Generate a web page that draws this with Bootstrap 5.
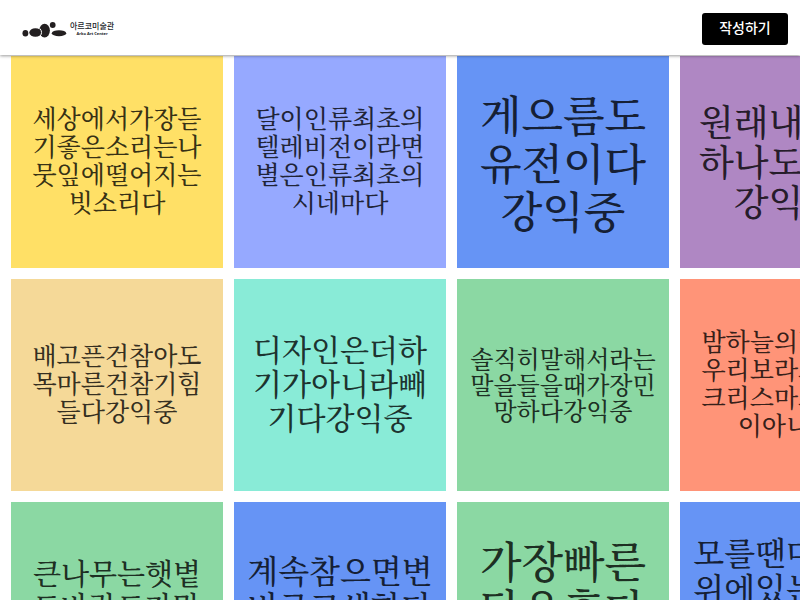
<!DOCTYPE html>
<html lang="ko">
<head>
<meta charset="utf-8">
<meta name="viewport" content="width=device-width, initial-scale=1">
<title>아르코미술관</title>
<link href="https://cdn.jsdelivr.net/npm/bootstrap@5.3.0/dist/css/bootstrap.min.css" rel="stylesheet">
<style>
body { font-family: "Noto Sans CJK KR", sans-serif; }
.site-bar { height: 55px; padding: 2px 12px 0 22px; box-shadow: 0 1px 3px rgba(0,0,0,.4); }
.brand-mark { width: 45px; height: 18px; margin-right: 3px; }
.brand-ko { font-size: 8px; line-height: 9px; font-weight: 500; }
.brand-en { font-family: "Noto Sans", sans-serif; font-size: 4px; line-height: 7px; font-weight: 700; }
.write-btn { --bs-btn-border-radius: 3px; height: 32px; width: 86px; font-size: 14px; line-height: 20px; font-weight: 500; padding: 0 0 3px; }
.wall { overflow: hidden; }
.tiles { grid-template-columns: repeat(4, 26.5vw); gap: 11px; padding: 1px 11px 11px; }
.tile { aspect-ratio: 1; padding-bottom: 6px; color: rgba(0,0,0,.8); font-family: "Noto Serif CJK KR", "Noto Sans CJK KR", serif; font-weight: 500; }
.t-24 { font-size: 24px; line-height: 26px; padding-bottom: 2px; }
.t-25 { font-size: 25px; line-height: 28px; }
.t-29 { font-size: 29px; line-height: 33px; }
.t-30 { font-size: 30px; line-height: 34px; }
.t-32 { font-size: 32px; line-height: 36px; }
.t-36 { font-size: 36px; line-height: 40px; padding-bottom: 2px; }
.t-43 { font-size: 43px; line-height: 48px; padding-bottom: 0; }
.yellow { background: #ffe066; }
.lilac { background: #96a9ff; }
.blue { background: #6694f5; }
.purple { background: #af87c3; }
.sand { background: #f5d998; }
.mint { background: #89ebd7; }
.green { background: #8bd8a3; }
.coral { background: #ff9478; }
</style>
<script src="https://cdn.jsdelivr.net/npm/bootstrap@5.3.0/dist/js/bootstrap.bundle.min.js"></script>
</head>
<body class="bg-white">
<header class="site-bar sticky-top bg-white d-flex align-items-center justify-content-between">
  <a href="#" class="d-flex align-items-center text-decoration-none text-dark" aria-label="아르코미술관">
    <svg class="brand-mark" viewBox="0 0 45 18" fill="#231f20" aria-hidden="true">
      <ellipse cx="3.4" cy="13.2" rx="2.9" ry="3.2"/>
      <ellipse cx="13.4" cy="12.5" rx="6.1" ry="4.3"/>
      <ellipse cx="22.6" cy="10.6" rx="5.3" ry="6.8"/>
      <path d="M18 8.6q3.2 4-.2 7.8" fill="none" stroke="#fff" stroke-width="1"/>
      <circle cx="30.7" cy="5" r="2.9"/>
      <ellipse cx="37" cy="13.2" rx="7.2" ry="3"/>
    </svg>
    <span class="d-flex flex-column align-items-center">
      <span class="brand-ko">아르코미술관</span>
      <span class="brand-en">Arko Art Center</span>
    </span>
  </a>
  <button type="button" class="write-btn btn btn-dark bg-black border-0">작성하기</button>
</header>
<main class="wall">
  <div class="tiles d-grid text-center text-nowrap">
    <article class="tile t-25 yellow d-flex align-items-center justify-content-center"><p class="m-0">세상에서가장듣<br>기좋은소리는나<br>뭇잎에떨어지는<br>빗소리다</p></article>
    <article class="tile t-25 lilac d-flex align-items-center justify-content-center"><p class="m-0">달이인류최초의<br>텔레비전이라면<br>별은인류최초의<br>시네마다</p></article>
    <article class="tile t-43 blue d-flex align-items-center justify-content-center"><p class="m-0">게으름도<br>유전이다<br>강익중</p></article>
    <article class="tile t-36 purple d-flex align-items-center justify-content-center"><p class="m-0">원래내것은<br>하나도없다<br>강익중</p></article>
    <article class="tile t-25 sand d-flex align-items-center justify-content-center"><p class="m-0">배고픈건참아도<br>목마른건참기힘<br>들다강익중</p></article>
    <article class="tile t-30 mint d-flex align-items-center justify-content-center"><p class="m-0">디자인은더하<br>기가아니라빼<br>기다강익중</p></article>
    <article class="tile t-24 green d-flex align-items-center justify-content-center"><p class="m-0">솔직히말해서라는<br>말을들을때가장민<br>망하다강익중</p></article>
    <article class="tile t-25 coral d-flex align-items-center justify-content-center"><p class="m-0">밤하늘의별들은<br>우리보라고있는<br>크리스마스장식<br>이아니다</p></article>
    <article class="tile t-29 green d-flex align-items-center justify-content-center"><p class="m-0">큰나무는햇볕<br>도바람도가많<br>다강익중</p></article>
    <article class="tile t-32 blue d-flex align-items-center justify-content-center"><p class="m-0">계속참으면변<br>비로고생한다<br>강익중</p></article>
    <article class="tile t-43 green d-flex align-items-center justify-content-center"><p class="m-0">가장빠른<br>답은후다<br>강익중</p></article>
    <article class="tile t-32 blue d-flex align-items-center justify-content-center"><p class="m-0">모를땐머리끝<br>위에있는하늘<br>을본다<br>강익중</p></article>
  </div>
</main>
</body>
</html>
